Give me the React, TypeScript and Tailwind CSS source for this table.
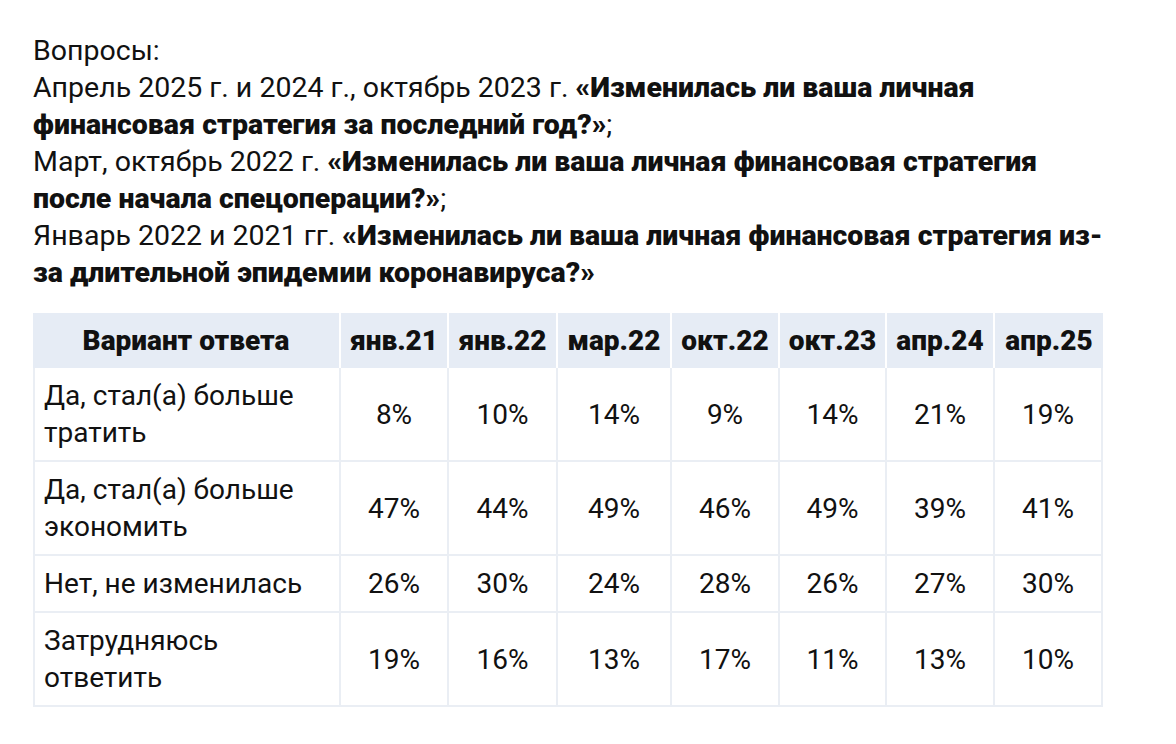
const cols = ["янв.21", "янв.22", "мар.22", "окт.22", "окт.23", "апр.24", "апр.25"];

const rows: { label: React.ReactNode; values: string[] }[] = [
  { label: <>Да, стал(а) больше<br />тратить</>, values: ["8%", "10%", "14%", "9%", "14%", "21%", "19%"] },
  { label: <>Да, стал(а) больше<br />экономить</>, values: ["47%", "44%", "49%", "46%", "49%", "39%", "41%"] },
  { label: "Нет, не изменилась", values: ["26%", "30%", "24%", "28%", "26%", "27%", "30%"] },
  { label: <>Затрудняюсь<br />ответить</>, values: ["19%", "16%", "13%", "17%", "11%", "13%", "10%"] },
];

const widths = ["w-[308px]", "w-[108px]", "w-[109px]", "w-[114px]", "w-[108px]", "w-[107px]", "w-[108px]", "w-[108px]"];

export default function App() {
  return (
    <div
      className="min-h-[744px] w-[1176px] bg-white pl-[33px] pt-[32px] text-[#111] text-[28.5px] leading-[37px]"
      style={{ fontFamily: "Roboto, 'Noto Sans', sans-serif" }}
    >
      <p className="whitespace-nowrap">
        Вопросы:
        <br />
        Апрель 2025 г. и 2024 г., октябрь 2023 г. <b className="font-black">«Изменилась ли ваша личная</b>
        <br />
        <b className="font-black">финансовая стратегия за последний год?»</b>;
        <br />
        Март, октябрь 2022 г. <b className="font-black">«Изменилась ли ваша личная финансовая стратегия</b>
        <br />
        <b className="font-black">после начала спецоперации?»</b>;
        <br />
        Январь 2022 и 2021 гг. <b className="font-black">«Изменилась ли ваша личная финансовая стратегия из-</b>
        <br />
        <b className="font-black">за длительной эпидемии коронавируса?»</b>
      </p>

      <table className="mt-[22px] w-[1070px] table-fixed border-separate border-spacing-0 text-[28px]">
        <colgroup>
          {widths.map((w, i) => (
            <col key={i} className={w} />
          ))}
        </colgroup>
        <thead>
          <tr>
            <th className="border-r-2 border-white bg-[#e6ecf5] py-[9px] text-center font-black">Вариант ответа</th>
            {cols.map((c, i) => (
              <th
                key={c}
                className={`bg-[#e6ecf5] py-[9px] text-center font-black ${i < cols.length - 1 ? "border-r-2 border-white" : ""}`}
              >
                {c}
              </th>
            ))}
          </tr>
        </thead>
        <tbody>
          {rows.map((r, ri) => (
            <tr key={ri}>
              <td className="border-b-2 border-l-2 border-r-2 border-[#eaeef4] py-[9px] pl-[9px] text-left">{r.label}</td>
              {r.values.map((v, vi) => (
                <td key={vi} className="border-b-2 border-r-2 border-[#eaeef4] py-[9px] text-center">
                  {v}
                </td>
              ))}
            </tr>
          ))}
        </tbody>
      </table>
    </div>
  );
}
